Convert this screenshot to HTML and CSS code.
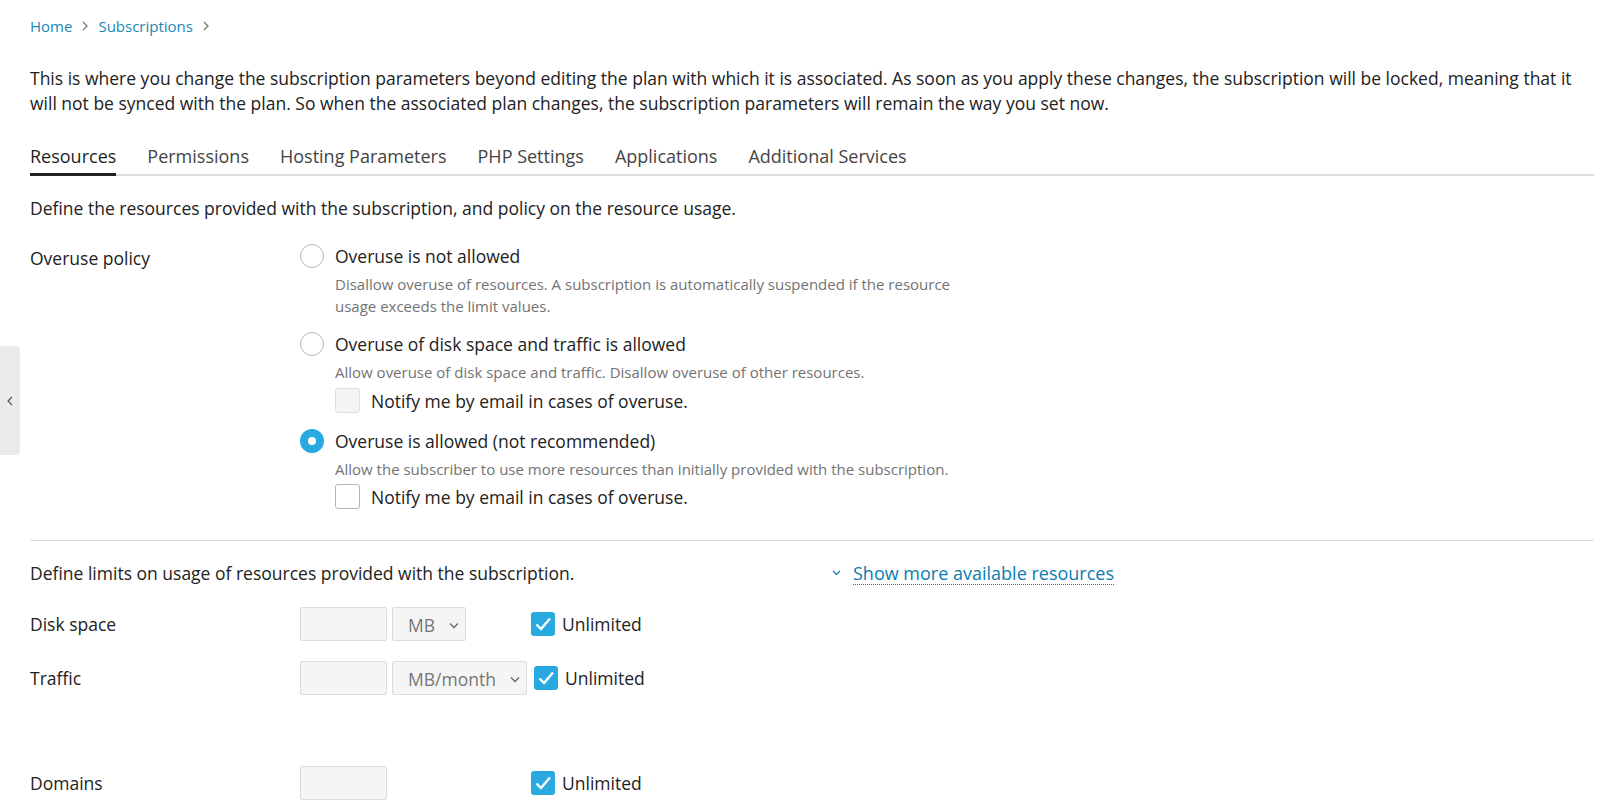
FILE: index.html
```html
<!DOCTYPE html>
<html lang="en">
<head>
<meta charset="utf-8">
<title>Subscription resources</title>
<link rel="stylesheet" href="styles.css">
</head>
<body>
<button class="side-handle" aria-label="Collapse">
  <svg width="6" height="10" viewBox="0 0 6 10"><path d="M5 1 1 5l4 4" fill="none" stroke="#555" stroke-width="1.2"/></svg>
</button>
<main class="page">
  <nav class="breadcrumbs">
    <a href="#">Home</a>
    <svg class="crumb-sep" width="6" height="10" viewBox="0 0 6 10"><path d="M1 1l4 4-4 4" fill="none" stroke="#777" stroke-width="1.3"/></svg>
    <a href="#">Subscriptions</a>
    <svg class="crumb-sep" width="6" height="10" viewBox="0 0 6 10"><path d="M1 1l4 4-4 4" fill="none" stroke="#777" stroke-width="1.3"/></svg>
  </nav>

  <p class="intro">This is where you change the subscription parameters beyond editing the plan with which it is associated. As soon as you apply these changes, the subscription will be locked, meaning that it will not be synced with the plan. So when the associated plan changes, the subscription parameters will remain the way you set now.</p>

  <div class="tabs">
    <a class="tab active" href="#">Resources</a>
    <a class="tab" href="#">Permissions</a>
    <a class="tab" href="#">Hosting Parameters</a>
    <a class="tab" href="#">PHP Settings</a>
    <a class="tab" href="#">Applications</a>
    <a class="tab" href="#">Additional Services</a>
  </div>

  <p class="hint">Define the resources provided with the subscription, and policy on the resource usage.</p>

  <div class="form-row policy">
    <div class="label policy-label">Overuse policy</div>
    <div class="options">
      <div class="option">
        <label class="opt-head"><span class="radio"></span>Overuse is not allowed</label>
        <div class="desc">Disallow overuse of resources. A subscription is automatically suspended if the resource usage exceeds the limit values.</div>
      </div>
      <div class="option">
        <label class="opt-head"><span class="radio"></span>Overuse of disk space and traffic is allowed</label>
        <div class="desc">Allow overuse of disk space and traffic. Disallow overuse of other resources.</div>
        <label class="sub-check"><span class="checkbox disabled"></span>Notify me by email in cases of overuse.</label>
      </div>
      <div class="option">
        <label class="opt-head"><span class="radio checked"></span>Overuse is allowed (not recommended)</label>
        <div class="desc">Allow the subscriber to use more resources than initially provided with the subscription.</div>
        <label class="sub-check"><span class="checkbox"></span>Notify me by email in cases of overuse.</label>
      </div>
    </div>
  </div>

  <hr class="divider">

  <div class="limits-head">
    <p class="limits-hint">Define limits on usage of resources provided with the subscription.</p>
    <a class="more-link" href="#">
      <svg width="9" height="6" viewBox="0 0 9 6"><path d="M1 1l3.5 3.5L8 1" fill="none" stroke="#0c7db1" stroke-width="1.2"/></svg>
      <span>Show more available resources</span>
    </a>
  </div>

  <div class="form-row limit">
    <div class="label">Disk space</div>
    <div class="field">
      <div class="value-group">
        <span class="text-input"></span>
        <span class="select w-mb">MB<svg width="10" height="7" viewBox="0 0 10 7"><path d="M1 1.5l4 4 4-4" fill="none" stroke="#666" stroke-width="1.3"/></svg></span>
      </div>
      <label class="unlimited"><span class="checkbox checked"><svg width="18" height="16" viewBox="0 0 18 16"><path d="M2.5 8.5l4.5 4.5L16 2.5" fill="none" stroke="#fff" stroke-width="2.4"/></svg></span>Unlimited</label>
    </div>
  </div>

  <div class="form-row limit traffic">
    <div class="label">Traffic</div>
    <div class="field">
      <div class="value-group">
        <span class="text-input"></span>
        <span class="select w-month">MB/month<svg width="10" height="7" viewBox="0 0 10 7"><path d="M1 1.5l4 4 4-4" fill="none" stroke="#666" stroke-width="1.3"/></svg></span>
      </div>
      <label class="unlimited"><span class="checkbox checked"><svg width="18" height="16" viewBox="0 0 18 16"><path d="M2.5 8.5l4.5 4.5L16 2.5" fill="none" stroke="#fff" stroke-width="2.4"/></svg></span>Unlimited</label>
    </div>
  </div>

  <div class="form-row limit">
    <div class="label">Domains</div>
    <div class="field">
      <div class="value-group">
        <span class="text-input"></span>
      </div>
      <label class="unlimited"><span class="checkbox checked"><svg width="18" height="16" viewBox="0 0 18 16"><path d="M2.5 8.5l4.5 4.5L16 2.5" fill="none" stroke="#fff" stroke-width="2.4"/></svg></span>Unlimited</label>
    </div>
  </div>
</main>
</body>
</html>
```
FILE: styles.css
```css
* { box-sizing: border-box; }

html, body {
  margin: 0;
  background: #fff;
}

body {
  font-family: "Open Sans", "DejaVu Sans", sans-serif;
  color: #222;
  font-size: 17.5px;
  overflow: hidden;
}

.side-handle {
  position: absolute;
  left: 0;
  top: 346px;
  width: 20px;
  height: 109px;
  padding: 0;
  border: 0;
  background: #ebebeb;
  border-radius: 0 4px 4px 0;
  display: flex;
  align-items: center;
  justify-content: center;
}

.page {
  padding: 16px 17px 0 30px;
}

.breadcrumbs {
  display: flex;
  align-items: center;
  gap: 10px;
  font-size: 15px;
  line-height: 20px;
}

.breadcrumbs a {
  color: #1b87b8;
  text-decoration: none;
}

.crumb-sep { display: block; }

.intro {
  margin: 30px 0 0;
  line-height: 25px;
}

.tabs {
  margin-top: 28px;
  display: flex;
  gap: 31px;
  border-bottom: 2px solid #dcdcdc;
}

.tab {
  font-size: 18px;
  line-height: 24px;
  padding-bottom: 5px;
  border-bottom: 3px solid transparent;
  margin-bottom: -2px;
  color: #444;
  text-decoration: none;
}

.tab.active {
  color: #1f1f1f;
  border-bottom-color: #222;
}

.hint {
  margin: 20px 0 0;
  line-height: 24px;
}

.form-row {
  display: grid;
  grid-template-columns: 270px 1fr;
}

.policy { margin-top: 24px; }

.label { line-height: 24px; }

.policy-label { padding-top: 2px; }

.options {
  display: flex;
  flex-direction: column;
  gap: 15px;
}

.option:last-child { margin-top: 1px; }

.opt-head {
  display: flex;
  align-items: center;
  gap: 11px;
  line-height: 24px;
}

.radio {
  width: 24px;
  height: 24px;
  border-radius: 50%;
  border: 1px solid #b9b9b9;
  background: #fff;
  flex: none;
}

.radio.checked {
  border: 8px solid #28aae1;
}

.desc {
  margin: 5px 0 0 35px;
  max-width: 645px;
  font-size: 15px;
  line-height: 22px;
  color: #737373;
}

.sub-check {
  display: flex;
  align-items: center;
  gap: 11px;
  margin: 5px 0 0 35px;
  line-height: 24px;
}

.option:last-child .sub-check { margin-top: 4px; }

.checkbox {
  width: 25px;
  height: 25px;
  flex: none;
  border: 1px solid #b5b5b5;
  border-radius: 3px;
  background: #fff;
  display: flex;
  align-items: center;
  justify-content: center;
}

.checkbox.disabled {
  background: #f4f4f4;
  border-color: #dedede;
}

.checkbox.checked {
  width: 24px;
  height: 24px;
  border: 0;
  background: #28aae1;
}

.divider {
  margin: 31px 0 0;
  border: 0;
  border-top: 1px solid #d8d8d8;
}

.limits-head {
  margin-top: 20px;
  display: flex;
  align-items: center;
}

.limits-hint {
  margin: 0;
  width: 802px;
  line-height: 24px;
}

.more-link {
  display: flex;
  align-items: center;
  gap: 12px;
  color: #0c7db1;
  text-decoration: none;
  font-size: 18px;
}

.more-link span {
  line-height: 22px;
  border-bottom: 1px dotted #0c7db1;
}

.limit {
  margin-top: 20px;
  align-items: center;
}

.limits-head + .limit { margin-top: 22px; }

.traffic { margin-bottom: 71px; }

.field {
  display: flex;
  align-items: center;
  gap: 7px;
}

.value-group {
  display: flex;
  gap: 5px;
  min-width: 224px;
}

.text-input,
.select {
  height: 34px;
  background: #f5f5f5;
  border: 1px solid #dcdcdc;
  border-radius: 2px;
}

.text-input { width: 87px; }

.select {
  display: flex;
  align-items: center;
  justify-content: space-between;
  padding: 2px 6px 0 15px;
  color: #767676;
}

.w-mb { width: 74px; }
.w-month { width: 135px; }

.unlimited {
  display: flex;
  align-items: center;
  gap: 7px;
  line-height: 24px;
}
```
